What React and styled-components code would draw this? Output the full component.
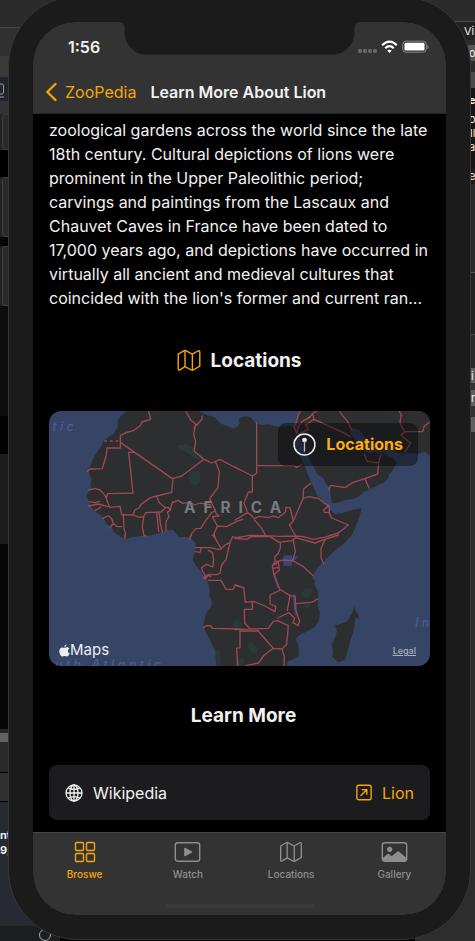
import React from "react";
import styled, { createGlobalStyle } from "styled-components";

const ACCENT = "#f5a608";

const GlobalStyle = createGlobalStyle`
  * { box-sizing: border-box; }
  html, body { margin: 0; background: #000; }
  body { font-family: Inter, "Liberation Sans", sans-serif; color: #f2f2f2; overflow: hidden; }
  button { font: inherit; border: 0; background: none; padding: 0; cursor: pointer; }
  a { text-decoration: none; }
  h1, h2, p { margin: 0; }
  svg { display: block; flex: none; }
`;

const Scene = styled.div`
  display: grid;
  height: 100vh;
  min-height: 941px;
  overflow: hidden;
`;

/* Editor windows behind the simulator */
const Desktop = styled.div`
  grid-area: 1 / 1;
  display: flex;
  justify-content: space-between;
  overflow: hidden;
`;

const Pane = styled.div`
  display: flex;
  flex-direction: column;
  width: ${(p) => p.$width}px;
  background: #242424;
`;

const Strip = styled.div`
  height: ${(p) => p.$h}px;
  flex: ${(p) => (p.$grow ? "1 0 auto" : "none")};
  background: ${(p) => p.$bg};
  border-top: ${(p) => (p.$line ? `1px solid ${p.$line}` : "0")};
  padding-left: ${(p) => p.$pad || 0}px;
  display: flex;
  align-items: center;
  overflow: hidden;
  white-space: nowrap;
  font-size: 11px;
  font-weight: ${(p) => (p.$bold ? 700 : 400)};
  line-height: 14px;
  color: #eee;
`;

const PaneButton = styled(Strip)`
  margin-left: 2px;
  border: 1px solid #414141;
  border-radius: 4px;
`;

const Phone = styled.main`
  grid-area: 1 / 1;
  position: relative;
  display: flex;
  flex-direction: column;
  margin: -4px 4px 1px 8px;
  padding: 25px 24px 24px;
  background: #1b1b1b;
  border: 1px solid #373737;
  border-radius: 70px;
`;

const Screen = styled.div`
  flex: 1;
  display: flex;
  flex-direction: column;
  background: #000;
  border-radius: 42px;
  overflow: hidden;
`;

const Header = styled.header`
  background: #333;
  border-bottom: 1px solid #242424;
`;

const StatusBar = styled.div`
  display: grid;
  grid-template-columns: minmax(0, 1fr) 241px minmax(0, 1fr);
  height: 48px;
`;

const Clock = styled.time`
  padding: 16px 0 0 35px;
  font-size: 16px;
  line-height: 18px;
  font-weight: 600;
  white-space: nowrap;
`;

const StatusIcons = styled.div`
  display: flex;
  justify-content: flex-end;
  padding: 17px 17px 0 0;
`;

const NavBar = styled.nav`
  display: flex;
  align-items: center;
  height: 43px;
  padding-left: 12px;
`;

const Back = styled.button`
  display: flex;
  align-items: center;
  gap: 7px;
  && {
    color: ${ACCENT};
    font-size: 16px;
    line-height: 20px;
  }
`;

const Title = styled.h1`
  margin-left: 14px;
  font-size: 16px;
  line-height: 20px;
  font-weight: 600;
`;

const Content = styled.section`
  flex: 1;
  display: flex;
  flex-direction: column;
  gap: 38px;
  padding: 4px 16px 12px;
`;

const Body = styled.p`
  font-size: 16px;
  line-height: 24px;
  white-space: nowrap;
`;

const Heading = styled.h2`
  display: flex;
  align-items: center;
  justify-content: center;
  gap: 9px;
  padding-left: ${(p) => (p.$inset ? 8 : 0)}px;
  font-size: 19px;
  line-height: ${(p) => (p.$inset ? 23 : 25)}px;
  font-weight: 700;
`;

const HeadingIcon = styled.span`
  color: ${ACCENT};
`;

const MapCard = styled.div`
  position: relative;
  height: 255px;
  border-radius: 12px;
  overflow: hidden;
`;

const MapButton = styled.button`
  && {
    position: absolute;
    top: 12px;
    right: 12px;
    display: flex;
    align-items: center;
    gap: 10px;
    padding: 10px 15px;
    border-radius: 8px;
    background: rgba(0, 0, 0, 0.4);
    color: #ffac05;
    font-size: 16px;
    line-height: 23px;
    font-weight: 700;
  }
`;

const MapBrand = styled.span`
  position: absolute;
  left: 10px;
  bottom: 6px;
  display: flex;
  align-items: center;
  font-size: 15px;
  line-height: 20px;
  color: #eceef2;
`;

const Legal = styled.a`
  position: absolute;
  right: 14px;
  bottom: 9px;
  font-size: 9px;
  line-height: 12px;
  font-weight: 500;
  color: #a9b0c0;
  text-decoration: underline;
`;

const LinkRow = styled.div`
  display: flex;
  align-items: center;
  gap: 10px;
  height: 55px;
  padding: 0 16px;
  border-radius: 8px;
  background: #1c1c1e;
  font-size: 16px;
  line-height: 20px;
`;

const ExternalLink = styled.a`
  display: flex;
  align-items: center;
  gap: 10px;
  margin-left: auto;
  color: ${ACCENT};
`;

const TabBar = styled.nav`
  display: grid;
  grid-template-columns: repeat(4, 1fr);
  height: 71px;
  padding-top: 8px;
`;

const Footer = styled.footer`
  background: #333;
  border-top: 1px solid #444;
`;

const Tab = styled.button`
  display: flex;
  flex-direction: column;
  align-items: center;
  justify-content: flex-start;
  align-self: start;
  gap: 4px;
  color: ${(p) => (p.$active ? ACCENT : "#8e8e8e")};
  && { font-size: 10px; line-height: 14px; font-weight: 500; }
`;

const HomeIndicator = styled.div`
  width: 148px;
  height: 4px;
  margin: 0 auto 7px;
  border-radius: 2px;
  background: #3a3a3a;
`;

const MapIcon = ({ width = 24, height = 23 }) => (
  <svg width={width} height={height} viewBox="0 0 24 23" fill="none" stroke="currentColor" strokeWidth="1.4" strokeLinejoin="round" aria-hidden="true">
    <path d="M1.2 5.2 7.2 1.6Q8 1.2 8.8 1.7L15.2 5.2 21 2Q22.8 1.2 22.8 3V17.2L16.2 21Q15.3 21.5 14.5 21L8 17.6 2.8 20.8Q1.2 21.7 1.2 19.8Z" />
    <path d="M8 1.6V17.6M15.4 5.2V21.2" />
  </svg>
);

const GridIcon = () => (
  <svg width="22" height="22" viewBox="0 0 22 22" fill="none" stroke="currentColor" strokeWidth="1.4" aria-hidden="true">
    <rect x="1.5" y="1.5" width="8" height="8" rx="1.2" />
    <rect x="12.5" y="1.5" width="8" height="8" rx="1.2" />
    <rect x="1.5" y="12.5" width="8" height="8" rx="1.2" />
    <rect x="12.5" y="12.5" width="8" height="8" rx="1.2" />
  </svg>
);

const PlayIcon = () => (
  <svg width="27" height="22" viewBox="0 0 27 22" aria-hidden="true">
    <rect x="1.3" y="1.7" width="24.4" height="18.6" rx="2.6" fill="none" stroke="currentColor" strokeWidth="1.4" />
    <path d="M10.2 7.4Q10.2 6.3 11.2 6.8L18 10.5Q18.7 11 18 11.5L11.2 15.2Q10.2 15.7 10.2 14.6Z" fill="currentColor" />
  </svg>
);

const PhotoIcon = () => (
  <svg width="27" height="22" viewBox="0 0 27 22" aria-hidden="true">
    <rect x="1.3" y="1.7" width="24.4" height="18.6" rx="2.6" fill="none" stroke="currentColor" strokeWidth="1.4" />
    <circle cx="8.7" cy="8.3" r="2.6" fill="currentColor" />
    <path d="M1.5 17.2 6.3 13.2Q7.3 12.5 8.3 13.3L10.7 15.3 16 10.8Q17.1 9.9 18.2 10.8L25.5 17V18.5Q25.5 20.2 23.4 20.2H3.6Q1.5 20.2 1.5 18.5Z" fill="currentColor" />
  </svg>
);

const GlobeIcon = () => (
  <svg width="18" height="18" viewBox="0 0 18 18" fill="none" stroke="currentColor" strokeWidth="1.3" aria-hidden="true">
    <circle cx="9" cy="9" r="8" />
    <ellipse cx="9" cy="9" rx="4" ry="8" />
    <path d="M9 1V17M1 9H17M3 3.9Q9 6.8 15 3.9M3 14.1Q9 11.2 15 14.1" />
  </svg>
);

const ArrowSquareIcon = () => (
  <svg width="16" height="17" viewBox="0 0 16 17" fill="none" stroke="currentColor" strokeWidth="1.4" aria-hidden="true">
    <rect x="0.9" y="1.2" width="14.2" height="14.6" rx="1.8" />
    <path d="M5 11.5 10.6 5.8M6.2 5.6H10.8V10.2" strokeLinecap="round" strokeLinejoin="round" />
  </svg>
);

const PinCircleIcon = () => (
  <svg width="23" height="23" viewBox="0 0 22 22" aria-hidden="true">
    <circle cx="11" cy="11" r="10" fill="none" stroke="#eee" strokeWidth="1.4" />
    <circle cx="11" cy="6.8" r="2.3" fill="#eee" />
    <path d="M11 8V17.4" stroke="#bbb" strokeWidth="1.3" strokeLinecap="round" />
  </svg>
);

const AppleIcon = () => (
  <svg width="11" height="13" viewBox="0 0 11 13" fill="currentColor" aria-hidden="true">
    <path d="M7.5 .2Q7.6 2.6 5.2 3.1 5.1 1 7.5 .2ZM5.4 3.8C6.4 3.8 8.6 2.1 10.3 4.4 8.1 6 8.7 8.5 10.8 9.3 9.9 11.3 8.9 12.6 7.9 12.6 6.9 12.6 6.5 12.1 5.5 12.1S4.2 12.6 3.4 12.6C1.8 12.6.3 9.8.3 7.3.3 4.7 1.9 3.4 3.3 3.4 4.2 3.4 4.8 3.8 5.4 3.8Z" />
  </svg>
);

const AfricaMap = () => (
  <svg width="100%" height="100%" viewBox="0 0 1143 765" preserveAspectRatio="xMidYMid slice" role="img" aria-label="Map of Africa">
    <rect width="1143" height="765" fill="#364466" />
    <g fill="#2c2e30">
      <path d="M235 0 216 14 208 27 205 52 192 70 178 79 163 89 158 104 148 117 140 130 133 142 127 160 118 172 123 192 128 207 124 219 126 232 113 252 118 268 123 282 138 302 151 310 163 322 172 338 188 352 200 368 213 375 228 385 250 378 273 375 300 374 330 367 348 359 373 357 382 370 388 379 410 377 428 384 438 394 440 402 438 422 431 447 440 463 453 477 468 497 478 517 483 542 481 552 489 572 487 588 478 597 472 607 468 617 463 647 478 677 490 702 498 717 502 765H713L716 752 748 737 750 717 746 698 740 682 755 670 773 662 798 647 808 632 813 607 806 582 808 542 796 522 798 508 790 502 798 482 808 467 824 452 843 432 866 411 883 400 908 372 920 347 932 315 938 292 908 297 880 306 858 309 843 297 833 292 830 282 815 262 803 252 795 232 788 217 780 197 773 182 766 160 758 147 748 125 738 107 730 88 723 77 711 57 723 76 738 88 748 67 763 107 780 142 793 167 805 190 823 202 832 220 843 232 845 255 850 277 868 274 888 267 908 265 928 257 944 243 958 237 975 228 988 222 1002 216 1018 202 1020 190 1028 182 1043 157 1030 139 1018 135 1005 124 993 127 975 122 958 127 943 117 930 103 918 87 903 62 908 52 933 57 943 75 958 87 970 104 988 112 1010 108 1028 115 1048 127 1070 125 1088 127 1110 128 1128 122 1143 135V0H755L748 20 743 47 723 45 690 48 658 40 640 42 618 35 605 19 590 15 570 22 572 38 565 47 553 52 532 44 513 37 498 19 473 12 448 0Z" />
      <path d="M916 585 910 607 900 622 893 632 870 640 858 644 864 660 860 675 848 702 852 720 850 738 868 754 888 747 897 718 903 692 912 664 916 647 920 617 930 627 928 609 921 603Z" />
    </g>
    <g fill="#29413e" opacity="0.65">
      <path d="M382 106 410 98 435 110 462 146 440 145 418 127ZM418 190 435 180 455 184 453 214 435 224 420 205Z" />
      <path d="M755 548 770 530 792 535 785 555 768 560ZM755 585 788 578 775 592ZM550 632 565 626 578 636 572 650 552 648ZM594 705 605 692 627 712 626 728 608 724ZM498 716 512 720 516 765H502ZM560 745 585 742 583 765H560Z" />
    </g>
    <g fill="#364675">
      <path d="M703 434 728 432 730 440 748 434 738 448 730 450 728 466 703 464Z" />
      <path d="M674 490 680 490 694 535 684 530ZM730 550 737 550 745 590 742 622 736 600Z" />
    </g>
    <g fill="none" stroke="#a04853" strokeWidth="4" strokeLinejoin="round" strokeLinecap="round">
      {/* north-west */}
      <g transform="translate(-27 -33)">
        <path d="M326 33 332 58 305 66 302 76 280 92 260 97 241 107V144H201L199 165 187 206 150 207 142 214M241 127 397 236 425 228 492 178 462 153 467 125 461 102 467 72 452 60 437 33M487 48 486 57 462 84M285 157H266L279 279 203 281 200 292M147 270 165 265 180 270 195 286 209 322 240 319 245 344 250 346 252 385 256 400 254 414M148 305 165 308 178 304M146 318 175 312 204 320M165 332 182 322M188 356 205 347 215 356 220 370 210 384M220 370 232 380 244 380M250 344 280 345 298 352 311 350M280 342 285 330 297 324 303 313 332 293 350 288 395 277 399 236M350 290 358 308 376 323 363 336 318 338 311 350 307 380 312 408M350 338 356 394M357 336 361 370 367 396M378 392V365L387 350 382 336 390 332 398 304M376 323 386 322 390 332M398 308 414 301 428 310 450 307 464 315 480 309 512 315M492 178 515 189 540 178 600 210M527 187 538 214 534 263 509 296 520 320 526 332 528 340 537 348 517 350 532 378 522 402 527 415 517 405M448 418 455 400 468 386 482 385 500 358 515 338 525 332M532 378 560 380 590 364 608 358" />
        <path d="M193 123H238" strokeDasharray="8 9" strokeLinecap="butt" />
      </g>
      {/* north-east */}
      <g transform="translate(558 -33)">
        <path d="M65 68V197H178L184 202 200 193M65 197V220L52 228 0 201M52 228V276H40L27 310 38 338 0 360M38 338 48 345 58 356 73 349 100 353 113 348 130 353 152 335V323H165L175 363 204 296 206 266 227 250M204 296 220 290 250 295 268 310 282 316 265 330 268 337H283M283 318V340L290 354 340 375 310 399 268 412 235 418 205 410 182 408 163 375 175 363M58 360 78 382 92 407 130 409 182 408M0 414 45 406 92 407" />
        <path d="M198 33 190 45 183 70 177 80 185 100 190 80 200 66 225 50 233 42 237 58 264 70 325 98 345 110M212 72 220 88 192 102M231 42 246 33M225 52 205 62M315 35 322 46 336 62 350 88M264 70 236 58 212 75M492 33 499 44 495 66 500 80 510 95 498 105 527 130 510 155M510 95H563L568 78 585 66M281 270 287 256 330 263 355 247 390 236 428 222 431 186 438 164M390 236 402 265M388 163 397 185 428 188" />
      </g>
      {/* south-west */}
      <g transform="translate(-27 372)">
        <path d="M255 0V10M313 0 318 3M455 0 450 8M466 38H510L540 44 555 30 570 22 578 5 600 10M520 0 543 40M484 38 480 52 466 50M505 46 517 52 521 75 518 96 500 88 485 98 488 110 495 118 492 130 505 118 530 119 540 115 545 90 558 74 570 22M496 132 504 122 512 124M505 136H543L558 163H579L586 150 600 155M490 278 500 272 513 273 517 280 600 282" />
      </g>
      {/* south-east */}
      <g transform="translate(558 372)">
        <path d="M0 10 35 13 50 5 105 4 132 22 171 17 182 8 240 24 268 14 310 0M136 22V38L130 55 119 66 121 80 112 92 117 122 134 162 165 182 157 226M175 17 181 50 173 76M270 14 258 40V68L266 86M122 80 147 75 173 77 205 95 235 122M112 92 130 82 133 106 118 118M114 100 130 97M0 150 26 158 31 202 55 199 90 213 120 230 122 214 105 207V180L134 166M52 202V223H28L29 264 44 280M128 249 162 233 179 250 174 263 189 272 194 258 181 222 180 206 230 202 248 192M165 182 181 184V206M0 284 100 280 114 260 128 257 160 272 155 328 141 342 115 340 93 315 67 285M15 288V338L5 340 8 392M141 342 148 365 147 392M115 340 88 360 70 384 33 392M15 288 68 288" />
      </g>
    </g>
    <g fontFamily="Inter, sans-serif">
      <text x="405" y="305" fontSize="46" fontWeight="700" fill="#777b80" letterSpacing="24">AFRICA</text>
      <g fontSize="38" fontStyle="italic" fontWeight="500" fill="#505d92">
        <text x="10" y="60" letterSpacing="10">tic</text>
        <text x="18" y="774" letterSpacing="10">uth Atlantic</text>
        <text x="1098" y="648" letterSpacing="10">In</text>
      </g>
    </g>
  </svg>
);

const TABS = [
  { label: "Broswe", icon: <GridIcon />, active: true },
  { label: "Watch", icon: <PlayIcon /> },
  { label: "Locations", icon: <MapIcon width={24} height={22} /> },
  { label: "Gallery", icon: <PhotoIcon /> },
];

export default function App() {
  return (
    <>
      <GlobalStyle />
      <Scene>
        <Desktop aria-hidden="true">
          <Pane $width={60}>
            <Strip $h={27} $bg="#2b2b2b" />
            <Strip $h={29} $bg="#303030" $line="#454545" />
            <Strip $h={21} $bg="#3a3a3a" />
            <Strip $h={24} $bg="#20242d">
              <svg width="8" height="20" viewBox="0 0 8 20" fill="none" stroke="#999">
                <path d="M0 5H2Q3.5 5 3.5 7V13Q3.5 15 2 15H0M0 18H4" />
              </svg>
            </Strip>
            <Strip $h={13} $bg="#333" />
            <PaneButton $h={36} $bg="#2a2a2a" />
            <Strip $h={27} $bg="#000" />
            <PaneButton $h={60} $bg="#2a2a2a" />
            <Strip $h={9} $bg="#050505" />
            <PaneButton $h={60} $bg="#2a2a2a" />
            <Strip $h={110} $bg="#0d0d0d" />
            <Strip $h={38} $bg="#030303" />
            <Strip $h={90} $bg="#1c1c1c" />
            <Strip $h={185} $bg="#050505" />
            <Strip $h={4} $bg="#262626" />
            <Strip $h={9} $bg="#626262" />
            <Strip $h={30} $bg="#2a2a2a" />
            <Strip $h={29} $bg="#303030" $line="#000" />
            <Strip $h={26} $bg="#282a33" $line="#000" />
            <Strip $h={15} $bg="#282a33" $bold>nt</Strip>
            <Strip $h={15} $bg="#282a33" $bold>9;</Strip>
            <Strip $h={69} $bg="#282a33" />
            <Strip $h={20} $bg="#1d1e20" $pad={38}>
              <svg width="14" height="14" viewBox="0 0 14 14" fill="none" stroke="#aaa"><circle cx="7" cy="6" r="5.5" /></svg>
            </Strip>
          </Pane>
          <Pane $width={60}>
            <Strip $h={21} $bg="#2b2b2b" />
            <Strip $h={19} $bg="#222" $line="#4a4a4a" $pad={49}>Vi</Strip>
            <Strip $h={5} $bg="#2b2b2b" />
            <Strip $h={16} $bg="#555" $pad={54}>ou</Strip>
            <Strip $h={11} $bg="#2b2b2b" />
            <Strip $h={16} $bg="#4a4a4a" />
            <Strip $h={24} $bg="#161616" $pad={54} $bold>e</Strip>
            <Strip $h={14} $bg="#161616" $pad={54}>o</Strip>
            <Strip $h={14} $bg="#161616" $pad={55}>ll</Strip>
            <Strip $h={14} $bg="#161616" $pad={54}>a</Strip>
            <Strip $h={14} $bg="#161616" />
            <Strip $h={16} $bg="#1c1c1c" $pad={54}>e</Strip>
            <Strip $h={88} $bg="#2a2a2a" />
            <Strip $h={62} $bg="#222" $line="#555" />
            <Strip $h={34} $bg="#2a2a2a" $line="#484848" />
            <Strip $h={15} $bg="#606060" $pad={56}>i</Strip>
            <Strip $h={7} $bg="#333" />
            <Strip $h={16} $bg="#606060" $pad={56}>r</Strip>
            <Strip $h={11} $bg="#333" />
            <Strip $h={15} $bg="#606060" />
            <Strip $h={140} $bg="#2d2d2d" $grow />
          </Pane>
        </Desktop>
        <Phone>
          <Screen>
            <Header>
              <StatusBar>
                <Clock>1:56</Clock>
                <svg width="241" height="33" viewBox="0 0 241 33" aria-hidden="true">
                  <path d="M0 0Q5.5 0 5.5 6V10C5.5 22 15 32.5 27 32.5H214C226 32.5 235.5 22 235.5 10V6Q235.5 0 241 0Z" fill="#1b1b1b" />
                </svg>
                <StatusIcons>
                  <svg width="72" height="16" viewBox="0 0 72 16" aria-hidden="true">
                    <g fill="#666">
                      <rect x="1" y="10" width="4" height="4" rx="1.4" />
                      <rect x="6" y="10" width="4" height="4" rx="1.4" />
                      <rect x="11" y="10" width="4" height="4" rx="1.4" />
                      <rect x="16" y="10" width="4" height="4" rx="1.4" />
                    </g>
                    <g fill="none" stroke="#fff" strokeWidth="2.2">
                      <path d="M25.2 6.2Q32.5-.9 39.8 6.2M28.2 9.2Q32.5 5 36.8 9.2" />
                    </g>
                    <path d="M30.2 11.6Q32.5 9.7 34.8 11.6L32.5 13.9Z" fill="#fff" />
                    <rect x="45.8" y="2.2" width="23.4" height="11" rx="3" fill="none" stroke="#888" />
                    <rect x="47.5" y="3.8" width="20" height="7.8" rx="1.4" fill="#fff" />
                    <path d="M70.3 6V9.8Q71.6 9.2 71.6 7.9T70.3 6Z" fill="#888" />
                  </svg>
                </StatusIcons>
              </StatusBar>
              <NavBar>
                <Back type="button">
                  <svg width="13" height="20" viewBox="0 0 13 20" fill="none" stroke="currentColor" strokeWidth="2.4" strokeLinecap="round" strokeLinejoin="round" aria-hidden="true">
                    <path d="M10.5 2 2.3 10 10.5 18" />
                  </svg>
                  ZooPedia
                </Back>
                <Title>Learn More About Lion</Title>
              </NavBar>
            </Header>
            <Content>
              <Body>
                zoological gardens across the world since the late<br />
                18th century. Cultural depictions of lions were<br />
                prominent in the Upper Paleolithic period;<br />
                carvings and paintings from the Lascaux and<br />
                Chauvet Caves in France have been dated to<br />
                17,000 years ago, and depictions have occurred in<br />
                virtually all ancient and medieval cultures that<br />
                coincided with the lion's former and current ran...
              </Body>
              <Heading>
                <HeadingIcon><MapIcon /></HeadingIcon>
                Locations
              </Heading>
              <MapCard>
                <AfricaMap />
                <MapButton type="button"><PinCircleIcon />Locations</MapButton>
                <MapBrand><AppleIcon />Maps</MapBrand>
                <Legal href="#legal">Legal</Legal>
              </MapCard>
              <Heading $inset>Learn More</Heading>
              <LinkRow>
                <GlobeIcon />
                Wikipedia
                <ExternalLink href="#lion"><ArrowSquareIcon />Lion</ExternalLink>
              </LinkRow>
            </Content>
            <Footer>
              <TabBar>
                {TABS.map((t) => (
                  <Tab key={t.label} type="button" $active={t.active}>
                    {t.icon}
                    {t.label}
                  </Tab>
                ))}
              </TabBar>
              <HomeIndicator />
            </Footer>
          </Screen>
        </Phone>
      </Scene>
    </>
  );
}
